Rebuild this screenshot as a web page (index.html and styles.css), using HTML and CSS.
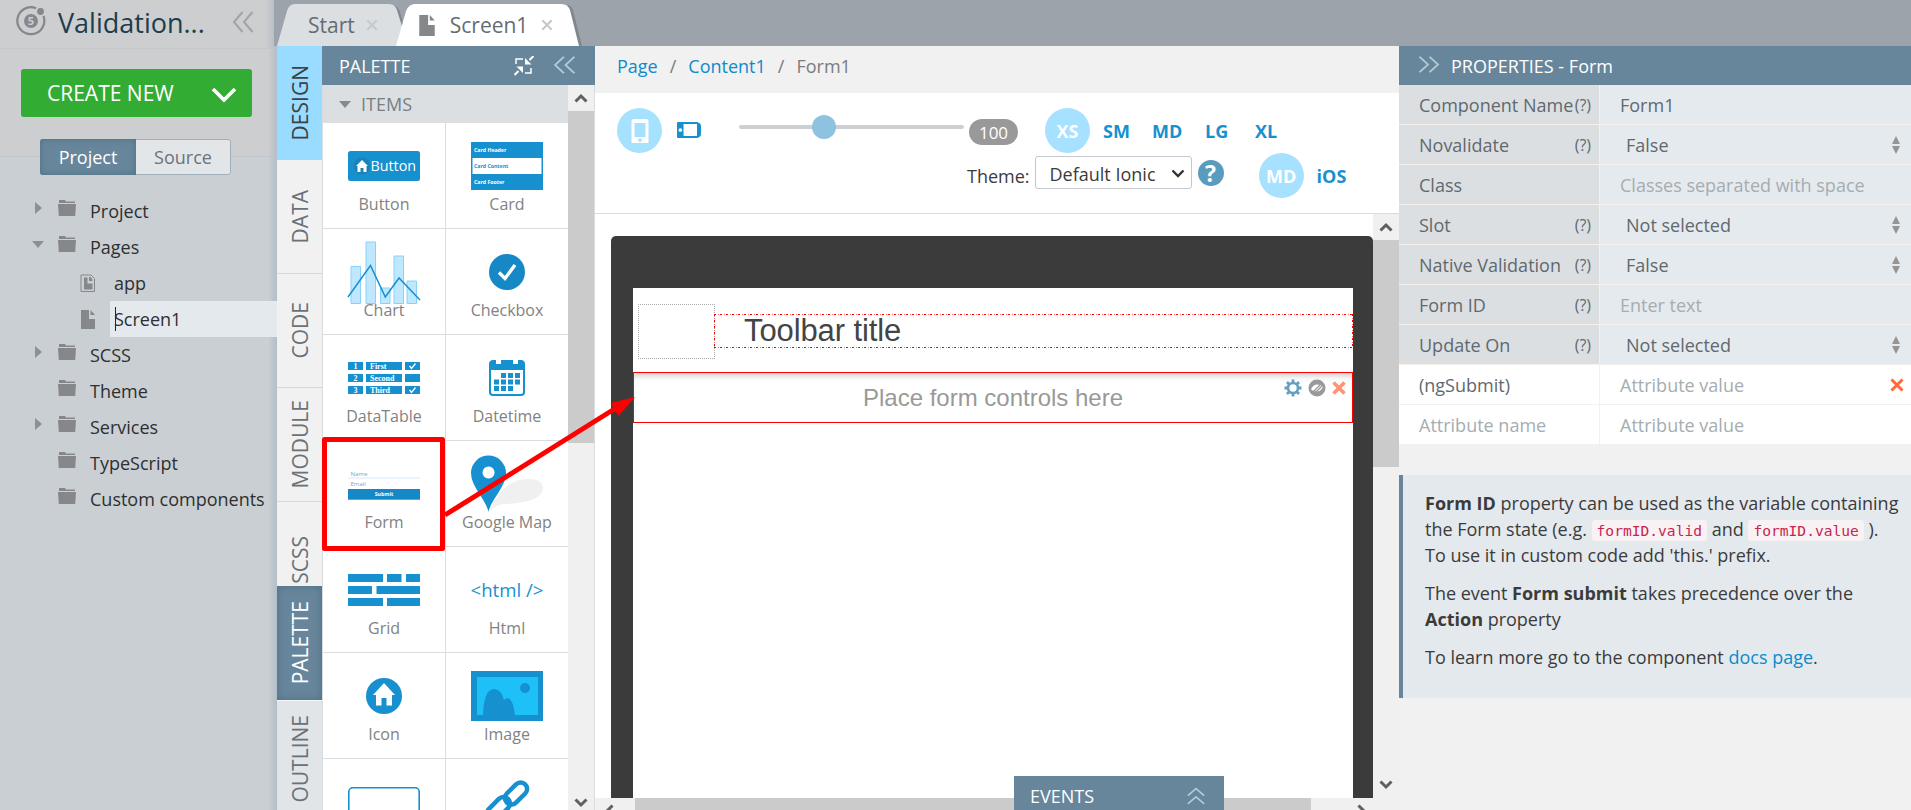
FILE: index.html
```
<!DOCTYPE html>
<html lang="en">
<head>
    <meta charset="UTF-8">
    <meta name="viewport" content="width=device-width, initial-scale=1.0">
    <title>Validation - Screen1</title>

    <link rel="stylesheet" href="styles.css">
</head>
<body>

    <!-- shared icons -->
    <svg class="sprite" width="0" height="0">
        <symbol id="folder" viewBox="0 0 18 16"><path d="M1 0h6l1 1.500h9V3H1zM0 4h18l-.8 12H.8z"/></symbol>
        <symbol id="file" viewBox="0 0 14 19"><path d="M0 0h8v9h6v10H0zM9.500 0L14 5H9.500z"/></symbol>
        <symbol id="dbl" viewBox="0 0 22 22" preserveAspectRatio="none"><path d="M10.500 1L2 11l8.500 10M20.500 1L12 11l8.500 10"/></symbol>
        <symbol id="chev" viewBox="0 0 14 10"><path d="M1.500 8.500L7 3l5.500 5.500"/></symbol>
        <symbol id="cross" viewBox="0 0 14 14"><path d="M1.500 1.500l11 11M12.500 1.500l-11 11"/></symbol>
        <symbol id="updown" viewBox="0 0 8 18"><path d="M0 8h8L4 0zM0 10h8L4 18z"/></symbol>
    </svg>

    <div class="app">
        <aside class="sidebar">
            <div class="sidebar__top">
                <svg class="logo" width="30" height="30" viewBox="0 0 30 30">
                    <path d="M20 2.200A13.500 13.500 0 1 0 27.500 10" fill="none" stroke="#85878b" stroke-width="2.200"/>
                    <circle cx="24.500" cy="5.500" r="3.400"/>
                    <circle cx="15" cy="15" r="7"/>
                    <text x="15" y="19">5</text>
                </svg>
                <h1>Validation...</h1>
                <svg class="dbl" width="22" height="22"><use href="#dbl"/></svg>
            </div>
            <div class="sidebar__new">
                <button class="create">CREATE NEW
                    <svg width="26" height="16" viewBox="0 0 26 16"><path d="M2 2l11 11L24 2" fill="none" stroke="#fff" stroke-width="3.600"/></svg>
                </button>
            </div>
            <div class="switch">
                <button class="active">Project</button>
                <button>Source</button>
            </div>
            <ul class="tree">
                <li><i class="arrow"></i><svg class="folder"><use href="#folder"/></svg>Project</li>
                <li><i class="arrow arrow_open"></i><svg class="folder"><use href="#folder"/></svg>Pages</li>
                <li class="sub"><svg class="app-file" viewBox="0 0 15 18"><path d="M1 1h10l3.500 3.500V17.500H1z" fill="none" stroke="#85878b"/><path d="M4 3.500h3.500v6h5v6H4zM9 3h1.500L12.500 5.500V7H9z"/></svg>app</li>
                <li class="sub"><svg class="file"><use href="#file"/></svg><span class="selected">Screen1</span></li>
                <li><i class="arrow"></i><svg class="folder"><use href="#folder"/></svg>SCSS</li>
                <li><i></i><svg class="folder"><use href="#folder"/></svg>Theme</li>
                <li><i class="arrow"></i><svg class="folder"><use href="#folder"/></svg>Services</li>
                <li><i></i><svg class="folder"><use href="#folder"/></svg>TypeScript</li>
                <li><i></i><svg class="folder"><use href="#folder"/></svg>Custom components</li>
            </ul>
        </aside>

        <main class="main">
            <nav class="tabs">
                <svg class="tabs__bg" width="320" height="46" viewBox="0 0 320 46">
                    <path class="tab-shadow" d="M4 46L13 12Q16 6 22 5H118Q123 5 126 12L135 46z"/>
                    <path d="M3 46L13 11Q15 4 21 4H115Q121 4 123 10L134 46z" fill="#dbdfe2"/>
                    <path class="tab-shadow" d="M124 46L135 12Q137 6 142 5H292Q297 5 299 10L308 46z"/>
                    <path d="M122 46L132 11Q135 4 141 4H287Q294 4 296 10L305 46z" fill="#fff"/>
                </svg>
                <a class="tab">Start<svg class="x"><use href="#cross"/></svg></a>
                <a class="tab tab_active"><svg class="doc"><use href="#file"/></svg>Screen1<svg class="x"><use href="#cross"/></svg></a>
            </nav>

            <div class="work">
                <div class="rail">
                    <a class="active"><span>DESIGN</span></a>
                    <a><span>DATA</span></a>
                    <a><span>CODE</span></a>
                    <a><span>MODULE</span></a>
                    <a class="short"><span>SCSS</span></a>
                    <a class="dark"><span>PALETTE</span></a>
                    <a class="light"><span>OUTLINE</span></a>
                </div>

                <section class="palette">
                    <div class="panel-head">PALETTE
                        <svg class="collapse" width="20" height="20" viewBox="0 0 20 20"><path d="M9 3H2v5M11 17h6v-5" fill="none" stroke="#fff" stroke-width="1.500"/><path d="M19.500 0l-4 4M.5 19l4-4" stroke="#fff" stroke-width="2"/><path d="M11 2v6.500h6.500zM9 17v-6.500H2.500z" fill="#fff"/></svg>
                        <svg class="dbl" width="23" height="18"><use href="#dbl"/></svg>
                    </div>
                    <div class="palette__body">
                        <div class="palette__list">
                            <h2>ITEMS</h2>
                            <div class="items">
                                <div class="item">
                                    <svg viewBox="0 0 72 64"><rect y="17" width="72" height="30" rx="2.500"/><circle cx="14" cy="32" r="8.500" fill="#1a82b5"/><path d="M14 26l6 6h-1.500v6H15.500v-4h-3v4H9.500v-6H8z" fill="#fff"/><text x="22.500" y="37" font-size="14.300" fill="#fff">Button</text></svg>
                                    Button
                                </div>
                                <div class="item">
                                    <svg viewBox="0 0 72 64"><rect y="8" width="72" height="48"/><rect x="1.500" y="24" width="69" height="16" fill="#fff"/><g class="tiny"><text x="3" y="18" fill="#fff">Card Header</text><text x="3" y="33.500">Card Content</text><text x="3" y="50" fill="#fff">Card Footer</text></g></svg>
                                    Card
                                </div>
                                <div class="item">
                                    <svg viewBox="0 0 72 64"><path d="M3 26.500h9.500v37H3zM18 2h9.500v61.500H18zM32.500 48H42v15.500h-9.500zM46 16h9.500v47.500H46zM59 41h9.500v22.500H59z" fill="#bfe8ff" stroke="#86d2fb"/><path d="M0 57l22.500-31.500L37.300 57 51 38l21 22" fill="none" stroke="#1690cf" stroke-width="1.500"/></svg>
                                    Chart
                                </div>
                                <div class="item">
                                    <svg viewBox="0 0 72 64"><circle cx="36" cy="32" r="18" fill="#1588c5"/><path d="M28 32.500l6 6L44 25" fill="none" stroke="#fff" stroke-width="3.400"/></svg>
                                    Checkbox
                                </div>
                                <div class="item">
                                    <svg viewBox="0 0 72 64"><path d="M0 16h15v8H0zM18 16h36v8H18zM57 16h15v8H57zM0 28h15v8H0zM18 28h36v8H18zM57 28h15v8H57zM0 40h15v8H0zM18 40h36v8H18zM57 40h15v8H57z"/><g class="serif"><text x="5.500" y="23">1</text><text x="22" y="23">First</text><text x="5.500" y="35">2</text><text x="22" y="35">Second</text><text x="5.500" y="47">3</text><text x="22" y="47">Third</text></g><path d="M61.500 20l2 2.500 4-5M61.500 44l2 2.500 4-5" fill="none" stroke="#fff" stroke-width="1.300"/></svg>
                                    DataTable
                                </div>
                                <div class="item">
                                    <svg viewBox="0 0 72 64"><path fill-rule="evenodd" d="M21 14h4v4h5v-4h12v4h5v-4h4q3 1 3 4v28q0 4-4 4H22q-4 0-4-4V18q0-3 3-4zM20 24v22q0 2 2 2h28q2 0 2-2V24z"/><path d="M30 27h5v5h-5zM37 27h5v5h-5zM44 27h5v5h-5zM23 33.500h5v5h-5zM30 33.500h5v5h-5zM37 33.500h5v5h-5zM44 33.500h5v5h-5zM23 40h5v5h-5zM30 40h5v5h-5zM37 40h5v5h-5z"/></svg>
                                    Datetime
                                </div>
                                <div class="item">
                                    <svg viewBox="0 0 72 64"><g class="form-text"><text x="2.500" y="24">Name</text><text x="2.500" y="33.500">Email</text></g><rect y="25.500" width="72" height="1" fill="#d5eaf6"/><rect y="37" width="72" height="10.700" fill="#1588c5"/><text x="36" y="44.300" font-size="5.200" font-weight="bold" text-anchor="middle" fill="#fff">Submit</text></svg>
                                    Form
                                </div>
                                <div class="item">
                                    <svg viewBox="0 0 72 64"><path d="M19 59Q31 27 57 27 72 27 72 36 71 47 52 50 41 52 32 52 25 53 19 59z" fill="#f0f0f0"/><path fill-rule="evenodd" d="M17.500 60C15 47 0 35 0 21a17.500 17.500 0 0 1 35 0C35 35 20 47 17.500 60zM17.500 14.500a6 6 0 1 0 .1 0z"/></svg>
                                    <span>Google Map</span>
                                </div>
                                <div class="item">
                                    <svg viewBox="0 0 72 64"><path d="M0 16h35v8H0zM39 16h14.500v8H39zM58 16h14v8H58zM0 28h24v8H0zM28.500 28H72v8H28.500zM0 40h35v8H0zM39 40h33v8H39z"/></svg>
                                    Grid
                                </div>
                                <div class="item">
                                    <svg viewBox="0 0 72 64"><text x="36" y="39" font-size="18.600" text-anchor="middle">&lt;html /&gt;</text></svg>
                                    Html
                                </div>
                                <div class="item">
                                    <svg viewBox="0 0 72 64"><circle cx="36" cy="32" r="18"/><path d="M36 19l11 12h-3v10.500h-5.500V34h-5v7.500H28V31h-3z" fill="#fff"/></svg>
                                    Icon
                                </div>
                                <div class="item">
                                    <svg viewBox="0 0 72 64"><rect y="7" width="72" height="50"/><rect x="6" y="13" width="61" height="38" fill="#1dc0f7"/><path d="M12 51Q13 25 23 25 30 25 33 36 41 29 44 51z"/><circle cx="54" cy="24" r="5"/></svg>
                                    Image
                                </div>
                                <div class="item">
                                    <svg viewBox="0 0 72 64"><rect x=".8" y="17.800" width="70.400" height="40" rx="4" fill="none" stroke="#1690cf" stroke-width="1.600"/></svg>
                                </div>
                                <div class="item">
                                    <svg viewBox="0 0 72 64"><g fill="none" stroke="#1690cf" stroke-width="4.500"><rect x="32" y="17" width="26" height="13" rx="6.500" transform="rotate(-45 45 23.500)"/><rect x="14" y="32" width="27" height="13" rx="6.500" transform="rotate(-45 27.500 38.500)"/></g></svg>
                                </div>
                            </div>
                        </div>
                        <div class="vscroll">
                            <svg><use href="#chev"/></svg>
                            <div class="vscroll__thumb vscroll__thumb_palette"></div>
                            <svg class="down"><use href="#chev"/></svg>
                        </div>
                    </div>
                </section>

                <section class="editor">
                    <div class="crumbs"><a>Page</a><i>/</i><a>Content1</a><i>/</i><span>Form1</span></div>
                    <div class="toolbar">
                        <div class="toolbar__row">
                            <span class="round"><svg width="18" height="24" viewBox="0 0 18 24"><path fill-rule="evenodd" d="M3 0h12q2.500 0 2.500 3v21H.5V3Q.5 0 3 0zM3.500 4v14h11V4zM9 19.300a1.800 1.800 0 1 0 .1 0z" fill="#fff"/></svg></span>
                            <svg class="tablet" width="24" height="16" viewBox="0 0 24 16"><path fill-rule="evenodd" d="M1 0h19q4 1 4 4v8q0 3-4 4H1q-1 0-1-1V1q0-1 1-1zM6.500 2v12H20V2zM3.300 6.200a1.800 1.800 0 1 0 .1 0z" fill="#1690cf"/></svg>
                            <div class="slider"><div class="slider__knob"></div></div>
                            <span class="badge">100</span>
                            <b class="round xs">XS</b>
                            <b class="size size_sm">SM</b><b class="size size_md">MD</b><b class="size size_lg">LG</b><b class="size">XL</b>
                        </div>
                        <div class="toolbar__row toolbar__theme">
                            Theme:
                            <div class="select">Default Ionic<svg width="14" height="10" viewBox="0 0 14 10"><path d="M1.500 1.500L7 7l5.500-5.500" fill="none" stroke="#333" stroke-width="2.400"/></svg></div>
                            <b class="help">?</b>
                            <b class="round md">MD</b>
                            <b class="ios">iOS</b>
                        </div>
                    </div>
                    <div class="stage">
                        <div class="stage__view">
                            <div class="device">
                                <div class="screen">
                                    <div class="screen__bar">
                                        <div class="screen__slot"></div>
                                        <div class="screen__title">Toolbar title</div>
                                    </div>
                                    <div class="dropzone">Place form controls here
                                        <div class="dropzone__tools">
                                            <svg width="18" height="18" viewBox="0 0 18 18"><g fill="none" stroke="#649fbf"><circle cx="9" cy="9" r="5" stroke-width="2.600"/><path d="M9 .5v3M9 14.500v3M.5 9h3M14.500 9h3M3 3l2.200 2.200M12.800 12.800L15 15M3 15l2.200-2.200M12.800 5.200L15 3" stroke-width="2.800"/></g></svg>
                                            <svg width="18" height="18" viewBox="0 0 18 18"><circle cx="9" cy="9" r="8.500" fill="#98999b"/><path d="M3 10.500Q5 5.500 9 5.500T15 7.500Q13 12.500 9 12.500T3 10.500z" fill="#fff"/><path d="M4.500 13.500l9-9M7 14l8-8" stroke="#98999b" stroke-width="1.300"/></svg>
                                            <svg class="del" width="14" height="14"><use href="#cross"/></svg>
                                        </div>
                                    </div>
                                </div>
                            </div>
                            <div class="vscroll">
                                <svg><use href="#chev"/></svg>
                                <div class="vscroll__thumb vscroll__thumb_stage"></div>
                                <svg class="down"><use href="#chev"/></svg>
                            </div>
                        </div>
                        <div class="hscroll">
                            <svg class="left"><use href="#chev"/></svg>
                            <div class="hscroll__thumb"></div>
                            <svg class="right"><use href="#chev"/></svg>
                        </div>
                        <div class="events">EVENTS<svg class="dbl" width="18" height="18"><use href="#dbl"/></svg></div>
                    </div>
                </section>

                <section class="props">
                    <div class="panel-head"><svg class="dbl dbl_right" width="22" height="17"><use href="#dbl"/></svg>PROPERTIES - Form</div>
                    <div class="prop"><label>Component Name<em>(?)</em></label><div>Form1</div></div>
                    <div class="prop prop_select"><label>Novalidate<em>(?)</em></label><div>False<svg><use href="#updown"/></svg></div></div>
                    <div class="prop"><label>Class</label><div class="empty">Classes separated with space</div></div>
                    <div class="prop prop_select"><label>Slot<em>(?)</em></label><div>Not selected<svg><use href="#updown"/></svg></div></div>
                    <div class="prop prop_select"><label>Native Validation<em>(?)</em></label><div>False<svg><use href="#updown"/></svg></div></div>
                    <div class="prop"><label>Form ID<em>(?)</em></label><div class="empty">Enter text</div></div>
                    <div class="prop prop_select"><label>Update On<em>(?)</em></label><div>Not selected<svg><use href="#updown"/></svg></div></div>
                    <div class="prop prop_custom"><label>(ngSubmit)</label><div class="empty">Attribute value<svg class="del"><use href="#cross"/></svg></div></div>
                    <div class="prop prop_custom"><label class="empty">Attribute name</label><div class="empty">Attribute value</div></div>

                    <div class="note">
                        <p><b>Form ID</b> property can be used as the variable containing<br>the Form state (e.g. <code>formID.valid</code> and <code>formID.value</code> ).<br>To use it in custom code add 'this.' prefix.</p>
                        <p>The event <b>Form submit</b> takes precedence over the<br><b>Action</b> property</p>
                        <p>To learn more go to the component <a>docs page</a>.</p>
                    </div>
                </section>
            </div>
        </main>
    </div>

    <!-- drag hint from the palette item to the form -->
    <svg class="hint" width="1911" height="810" viewBox="0 0 1911 810">
        <rect x="324.500" y="439.500" width="118" height="109" fill="none" stroke="#f00" stroke-width="5" stroke-linejoin="round"/>
        <path d="M445 515L616 408" stroke="#f00" stroke-width="5"/>
        <path d="M635 397L610.500 403 618.500 416z" fill="#f00"/>
    </svg>

</body>
</html>
```
FILE: styles.css
```
* {
    box-sizing: border-box;
}

body {
    margin: 0;
    font: 18px/24px 'Open Sans', sans-serif;
    color: #3b3b3b;
    background: #f1f1f1;
    overflow: hidden;
}

h1, h2, p, ul {
    margin: 0;
    padding: 0;
}

button {
    font: inherit;
    border: none;
    padding: 0;
}

i, em {
    font-style: normal;
}

svg {
    flex: none;
}

.sprite {
    position: absolute;
}

.app {
    display: flex;
    width: 1911px;
    height: 810px;
    overflow: hidden;
}

.dbl {
    fill: none;
    stroke: #b3cad8;
    stroke-width: 2;
}

.dbl_right {
    transform: scaleX(-1);
}

/* sidebar */
.sidebar {
    width: 277px;
    flex: none;
    background: linear-gradient(to left, #b3bec8, rgba(183, 193, 203, 0) 9px) #cacfd3;
}

.sidebar__top {
    display: flex;
    align-items: center;
    width: 274px;
    height: 49px;
    padding-left: 16px;
    background: linear-gradient(to left, #b9c1c6, rgba(183, 193, 203, 0) 9px) #cdced0;
    border-bottom: 1px solid #c3c8cb;
}

.sidebar__top h1 {
    width: 158px;
    margin: -3px 0 0 12px;
    font-size: 27px;
    line-height: 40px;
    font-weight: normal;
    color: #1b3d4c;
}

.sidebar__top .dbl {
    margin: -5px 0 0 16px;
    stroke: #a0a4a8;
}

.logo {
    fill: #85878b;
    margin-top: -6px;
}

.logo text {
    font-size: 11px;
    font-weight: bold;
    fill: #cdced0;
    text-anchor: middle;
}

.sidebar__new {
    height: 108px;
    padding: 20px 0 0 21px;
    background: linear-gradient(to left, #b3bec8, rgba(183, 193, 203, 0) 9px) #cdced0;
    border-bottom: 1px solid #c0c6ca;
}

.create {
    display: flex;
    align-items: center;
    justify-content: space-between;
    width: 231px;
    height: 48px;
    padding: 0 15px 0 26px;
    border-radius: 3px;
    background: #33ac33;
    color: #fff;
    font-size: 21px;
}

.create svg {
    margin-top: 3px;
}

.switch {
    display: flex;
    width: 191px;
    height: 36px;
    margin: -18px 0 18px 40px;
    border: 1px solid #9fb0bb;
    border-radius: 3px;
    background: #e2e6e9;
}

.switch button {
    width: 94px;
    background: none;
    color: #6c7378;
}

.switch .active {
    width: 96px;
    margin: -1px 0 -1px -1px;
    color: #fff;
    background: #67869b;
    border-radius: 3px 0 0 3px;
    box-shadow: inset 0 0 6px #506f84;
}

.tree {
    list-style: none;
}

.tree li {
    display: flex;
    height: 36px;
    line-height: 36px;
    padding-left: 32px;
    color: #2d2f31;
    white-space: nowrap;
}

.tree i {
    width: 26px;
}

.tree .arrow::before {
    content: '';
    display: block;
    margin: 9px 0 0 3px;
    border-left: 7px solid #8b9094;
    border-top: 6px solid transparent;
    border-bottom: 6px solid transparent;
    width: 0;
}

.tree .arrow_open::before {
    margin: 12px 0 0;
    border-top: 7px solid #8b9094;
    border-left: 6px solid transparent;
    border-right: 6px solid transparent;
    border-bottom: none;
}

.folder {
    width: 18px;
    height: 16px;
    margin: 7px 14px 0 0;
    fill: #85878b;
}

.tree .sub {
    padding-left: 80px;
}

.app-file {
    width: 15px;
    height: 18px;
    margin: 9px 19px 0 0;
    fill: #85878b;
}

.file {
    width: 14px;
    height: 19px;
    margin: 9px 15px 0 1px;
    fill: #85878b;
}

.selected {
    flex: 1;
    padding-left: 4px;
    background: linear-gradient(#222, #222) 5px 6px / 1px 24px no-repeat #e4e9ed;
}

/* tabs */
.main {
    flex: 1;
    min-width: 0;
}

.tabs {
    position: relative;
    display: flex;
    height: 46px;
    margin-left: -3px;
    background: #9ca3ab;
    font-size: 21px;
    line-height: 43px;
    color: #656c72;
}

.tabs__bg {
    position: absolute;
    left: 0;
    top: 0;
}

.tab-shadow {
    fill: #80878e;
}

.tab {
    position: relative;
    display: flex;
    align-items: center;
    padding: 5px 0 0 34px;
}

.tab_active {
    padding-left: 41px;
}

.tab .doc {
    width: 16px;
    height: 21px;
    margin-right: 15px;
    fill: #85878b;
}

.tab .x {
    width: 12px;
    height: 12px;
    margin: 0 0 2px 11px;
    stroke: #c6cacd;
    stroke-width: 2.600;
}

.tab_active .x {
    margin-left: 13px;
}

.work {
    display: flex;
    height: 764px;
}

/* vertical rail */
.rail {
    width: 45px;
    flex: none;
    font-size: 21px;
    color: #6a7178;
    background: #f1f1f1;
}

.rail a {
    display: flex;
    align-items: center;
    justify-content: center;
    height: 114px;
    border-bottom: 1px solid #d5d9dd;
}

.rail span {
    writing-mode: vertical-rl;
    transform: rotate(180deg);
    line-height: 26px;
}

.rail .active {
    background: #99dcff;
    border: none;
    color: #3b4248;
}

.rail .short {
    height: 84px;
    padding-bottom: 2px;
    align-items: flex-end;
    border: none;
}

.rail .dark {
    color: #fff;
    background: #67869b;
    border: none;
    box-shadow: inset 0 0 8px #506f84;
}

.rail .light {
    padding-top: 3px;
    background: #e1e5e8;
    border-top: 1px solid #f5f6f7;
}

/* palette */
.palette {
    width: 273px;
    flex: none;
    border-left: 1px solid #d9dde0;
    background: #fff;
}

.panel-head {
    display: flex;
    align-items: center;
    height: 39px;
    color: #fff;
    background: #67869b;
}

.palette .panel-head {
    margin-left: -1px;
    padding-left: 17px;
}

.panel-head .collapse {
    margin-left: auto;
}

.palette .dbl {
    margin: 0 19px 2px 19px;
}

.palette__body {
    display: flex;
    border-right: 1px solid #d9dde0;
    height: 725px;
    overflow: hidden;
}

.palette__list {
    width: 245px;
}

.palette h2 {
    display: flex;
    align-items: center;
    height: 38px;
    font-size: 18px;
    font-weight: normal;
    color: #7a7e82;
    background: #dbdfe2;
}

.palette h2::before {
    content: '';
    margin: 0 10px 0 16px;
    border-top: 7px solid #85898d;
    border-left: 6px solid transparent;
    border-right: 6px solid transparent;
}

.items {
    display: grid;
    grid-template-columns: 122px 122px;
    grid-auto-rows: 105px;
    gap: 1px;
    background: #d9dde0;
}

.item {
    display: flex;
    flex-direction: column;
    align-items: center;
    padding-top: 11px;
    background: #fff;
    font-size: 16px;
    color: #828282;
    white-space: nowrap;
}

.item svg {
    width: 72px;
    height: 64px;
    margin-bottom: -6px;
    fill: #1690cf;
    overflow: visible;
}

.tiny {
    font: bold 5.200px 'Open Sans', sans-serif;
}

.serif {
    font: bold 8px 'Liberation Serif', serif;
    fill: #fff;
}

.form-text {
    font: 6px 'Open Sans', sans-serif;
    fill: #5aaedb;
}

/* scrollbars */
.vscroll {
    display: flex;
    flex-direction: column;
    align-items: center;
    width: 26px;
    flex: none;
    background: #f0f0f0;
}

.vscroll svg, .hscroll svg {
    width: 14px;
    height: 10px;
    margin: 8px 0;
    fill: none;
    stroke: #606060;
    stroke-width: 3;
}

.vscroll__thumb {
    width: 26px;
    background: #cbcbcb;
}

.vscroll__thumb_palette {
    height: 332px;
}

.vscroll__thumb_stage {
    height: 227px;
}

.vscroll .down {
    margin-top: auto;
    transform: scaleY(-1);
}

.palette .down {
    margin-bottom: 2px;
}

/* editor */
.editor {
    width: 804px;
    flex: none;
    background: #fff;
}

.crumbs {
    height: 47px;
    padding: 8px 0 0 22px;
    background: #f1f1f1;
    color: #7b7b7b;
}

.crumbs a, .note a {
    color: #0d8acb;
}

.crumbs i {
    margin: 0 12px;
}

.toolbar {
    height: 121px;
    padding-top: 15px;
    border-bottom: 1px solid #d9dcdf;
}

.toolbar__row {
    display: flex;
    align-items: center;
    height: 45px;
    padding-left: 22px;
}

.round {
    display: flex;
    align-items: center;
    justify-content: center;
    width: 45px;
    height: 45px;
    border-radius: 50%;
    background: #a6e1ff;
    color: #fff;
}

.tablet {
    margin: 0 38px 2px 15px;
}

.slider {
    width: 225px;
    height: 4px;
    margin-bottom: 7px;
    border-radius: 2px;
    background: #cbd0d4;
}

.slider__knob {
    width: 24px;
    height: 24px;
    margin: -10px 0 0 73px;
    border-radius: 50%;
    background: #8dc3e1;
}

.badge {
    width: 49px;
    height: 26px;
    margin: 2px 27px 0 5px;
    border-radius: 13px;
    background: #999;
    color: #fff;
    font-size: 17px;
    line-height: 27px;
    text-align: center;
}

.size, .ios {
    color: #1690cf;
}

.xs {
    margin-right: 13px;
}

.size_sm {
    width: 49px;
}

.size_md {
    width: 53px;
}

.size_lg {
    width: 50px;
}

.toolbar__theme {
    padding-left: 372px;
}

.select {
    display: flex;
    align-items: center;
    justify-content: space-between;
    width: 157px;
    height: 33px;
    margin: -6px 6px 0 5px;
    padding: 3px 6px 0 14px;
    border: 1px solid #c6c6ce;
    border-radius: 3px;
}

.help {
    width: 26px;
    height: 26px;
    margin-top: -6px;
    border-radius: 50%;
    background: #5a9cbf;
    color: #fff;
    font-size: 23px;
    line-height: 27px;
    text-align: center;
}

.md {
    margin: 0 13px 0 35px;
}

.stage {
    position: relative;
    height: 596px;
    overflow: hidden;
}

.stage__view {
    display: flex;
    height: 584px;
    padding-left: 16px;
}

.device {
    width: 762px;
    height: 562px;
    margin-top: 22px;
    padding: 52px 20px 0 22px;
    border-radius: 5px 5px 0 0;
    background: #3b3b3b;
}

.screen {
    height: 510px;
    background: #fff;
    font-family: 'Liberation Sans', sans-serif;
}

.screen__bar {
    display: flex;
    align-items: center;
    height: 84px;
    padding: 2px 0 0 5px;
}

.screen__slot {
    width: 77px;
    height: 55px;
    margin-top: 1px;
    border: 1px dotted #aaa;
}

/* dash-dot outline */
.screen__title {
    --dash: #f00 0 2px, transparent 2px 4px, #f66 4px 5px, transparent 5px 6px;
    flex: 1;
    height: 34px;
    margin-left: -1px;
    padding-left: 30px;
    background:
        repeating-linear-gradient(90deg, var(--dash)) 0 0 / 100% 1px no-repeat,
        repeating-linear-gradient(90deg, var(--dash)) 0 100% / 100% 1px no-repeat,
        repeating-linear-gradient(var(--dash)) 0 0 / 1px 100% no-repeat,
        repeating-linear-gradient(var(--dash)) 100% 0 / 1px 100% no-repeat;
    font-size: 31px;
    line-height: 34px;
    letter-spacing: -.1px;
    color: #444;
}

.dropzone {
    position: relative;
    height: 51px;
    border: 1px solid #f00;
    box-shadow: inset 0 7px 7px -5px rgba(0, 0, 0, .25);
    font-size: 24px;
    line-height: 50px;
    text-align: center;
    color: #999;
}

.dropzone__tools {
    position: absolute;
    right: 6px;
    top: 6px;
    display: flex;
    align-items: center;
    gap: 6px;
}

.dropzone .del {
    stroke: #ff9475;
    stroke-width: 3.600;
}

.hscroll {
    display: flex;
    height: 26px;
    background: #f0f0f0;
}

.hscroll__thumb {
    width: 676px;
    background: #cbcbcb;
}

.hscroll .left {
    margin: 8px 19px 0 7px;
    transform: rotate(-90deg);
}

.hscroll .right {
    margin-left: 44px;
    transform: rotate(90deg);
}

.events {
    position: absolute;
    left: 419px;
    bottom: 0;
    display: flex;
    align-items: center;
    justify-content: space-between;
    width: 210px;
    height: 34px;
    padding: 5px 19px 0 16px;
    color: #fff;
    background: #67869b;
}

.events .dbl {
    transform: rotate(90deg);
}

/* properties */
.props {
    flex: 1;
    color: #5f696f;
    background: #f1f1f1;
}

.props .panel-head {
    padding-left: 19px;
}

.props .panel-head .dbl {
    margin: -3px 11px 0 0;
}

.prop {
    display: flex;
    height: 40px;
    line-height: 40px;
    border-bottom: 1px solid #f6efea;
    background: #e5eaee;
    white-space: nowrap;
}

.prop label {
    display: flex;
    justify-content: space-between;
    width: 201px;
    padding: 0 8px 0 20px;
    border-right: 1px solid #f1f1f1;
    background: #dbdfe2;
}

.prop em {
    font-size: 16px;
}

.prop div {
    display: flex;
    flex: 1;
    align-items: center;
    justify-content: space-between;
    padding: 0 11px 0 20px;
}

.prop_select div {
    padding-left: 26px;
}

.prop div svg {
    width: 8px;
    height: 18px;
    fill: #949494;
}

.prop .empty {
    color: #a5adb1;
}

.prop_custom, .prop_custom label {
    background: #fff;
    border-color: #f1f1f1;
}

.prop div .del {
    width: 14px;
    height: 14px;
    margin-right: -4px;
    stroke: #ff6a39;
    stroke-width: 3;
}

.note {
    height: 223px;
    margin-top: 30px;
    padding: 15px 0 0 22px;
    border-left: 4px solid #67869b;
    background: #e4e9ee;
    color: #3b3b3b;
    font-size: 18px;
    line-height: 26px;
    white-space: nowrap;
}

.note p {
    margin-bottom: 12px;
}

.note code {
    padding: 2px 5px;
    border-radius: 3px;
    background: #f9f2f4;
    color: #c7254e;
    font: 14.600px 'DejaVu Sans Mono', monospace;
}

.hint {
    position: absolute;
    left: 0;
    top: 0;
    pointer-events: none;
}
```
